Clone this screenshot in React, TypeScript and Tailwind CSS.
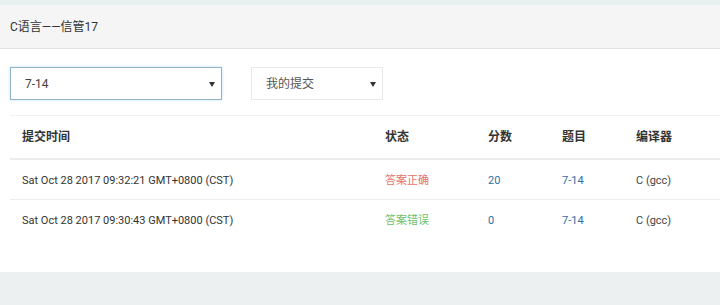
import React from 'react';

interface Submission {
  time: string;
  status: string;
  ok: boolean;
  score: number;
  problem: string;
  compiler: string;
}

const rows: Submission[] = [
  { time: 'Sat Oct 28 2017 09:32:21 GMT+0800 (CST)', status: '答案正确', ok: true, score: 20, problem: '7-14', compiler: 'C (gcc)' },
  { time: 'Sat Oct 28 2017 09:30:43 GMT+0800 (CST)', status: '答案错误', ok: false, score: 0, problem: '7-14', compiler: 'C (gcc)' },
];

function Caret() {
  return (
    <svg width="6" height="5" viewBox="0 0 6 5" className="mt-[1px]">
      <path d="M0 0h6L3 5z" fill="#333" />
    </svg>
  );
}

export default function App() {
  return (
    <div
      className="w-[720px] h-[305px] overflow-hidden bg-[#ecf0f1] text-[#333]"
      style={{ fontFamily: 'Roboto, "Noto Sans CJK SC", sans-serif' }}
    >
      <div className="h-[5px] bg-[#e6f0ee]" />

      {/* Panel */}
      <div className="w-[760px] bg-white">
        <div className="h-[44px] bg-[#f5f5f5] border-b border-[#e2e2e2] flex items-center px-[10px] text-[12px] text-[#333]">
          C语言——信管17
        </div>

        <div className="pt-[18px] pb-[32px] pl-[10px]">
          {/* Filters */}
          <div className="flex items-center h-[33px]">
            <div className="w-[212px] h-full border border-[#8fb4c9] shadow-[0_0_3px_rgba(102,175,233,0.35)] flex items-center justify-between pl-[14px] pr-[6px] text-[12px] text-[#444]">
              <span>7-14</span>
              <Caret />
            </div>
            <div className="ml-[29px] w-[132px] h-full border border-[#e8e8e8] flex items-center justify-between pl-[14px] pr-[6px] text-[12px] text-[#555]">
              <span>我的提交</span>
              <Caret />
            </div>
          </div>

          {/* Table */}
          <div className="mt-[15px] border-t border-[#f0f0f0] text-[11px]">
            <div className="grid grid-cols-[363px_103px_74px_74px_1fr] h-[44px] items-center border-b-2 border-[#ececec] text-[12px] font-bold text-[#333]">
              <div className="pl-[12px]">提交时间</div>
              <div className="pl-[12px]">状态</div>
              <div className="pl-[12px]">分数</div>
              <div className="pl-[12px]">题目</div>
              <div className="pl-[12px]">编译器</div>
            </div>
            {rows.map((r, i) => (
              <div
                key={i}
                className={`grid grid-cols-[363px_103px_74px_74px_1fr] h-[40px] pt-[3px] items-center ${i === 0 ? 'border-b border-[#ececec]' : ''}`}
              >
                <div className="pl-[12px] text-[#333]">{r.time}</div>
                <div className={`pl-[12px] ${r.ok ? 'text-[#e8716b]' : 'text-[#6cc06c]'}`}>{r.status}</div>
                <div className="pl-[12px] text-[#2f6ea5]">{r.score}</div>
                <div className="pl-[12px] text-[#2f6ea5]">{r.problem}</div>
                <div className="pl-[12px] text-[#444]">{r.compiler}</div>
              </div>
            ))}
          </div>
        </div>
      </div>
    </div>
  );
}
